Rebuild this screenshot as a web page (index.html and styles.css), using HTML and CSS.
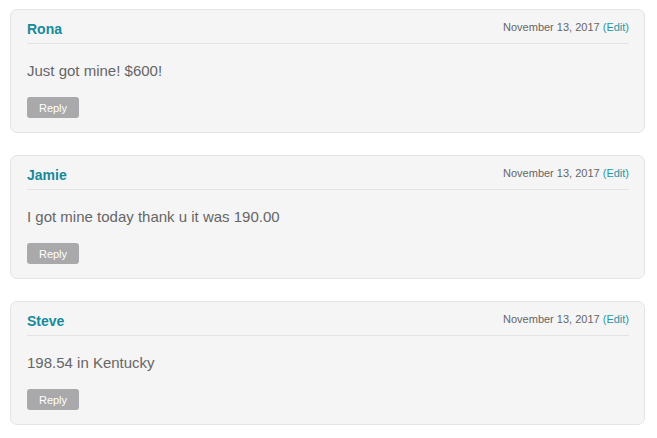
FILE: index.html
```html
<!DOCTYPE html>
<html lang="en">
<head>
    <meta charset="UTF-8">
    <meta name="viewport" content="width=device-width, initial-scale=1.0">
    <title>Comments</title>
    <link rel="stylesheet" href="styles.css">
</head>
<body>
    <div class="comment-list">
        <div class="comment">
            <div class="comment-header">
                <span class="comment-author">Rona</span>
                <span class="comment-date">November 13, 2017 <a href="#">(Edit)</a></span>
            </div>
            <p class="comment-text">Just got mine! $600!</p>
            <button class="reply-btn">Reply</button>
        </div>

        <div class="comment">
            <div class="comment-header">
                <span class="comment-author">Jamie</span>
                <span class="comment-date">November 13, 2017 <a href="#">(Edit)</a></span>
            </div>
            <p class="comment-text">I got mine today thank u it was 190.00</p>
            <button class="reply-btn">Reply</button>
        </div>

        <div class="comment">
            <div class="comment-header">
                <span class="comment-author">Steve</span>
                <span class="comment-date">November 13, 2017 <a href="#">(Edit)</a></span>
            </div>
            <p class="comment-text">198.54 in Kentucky</p>
            <button class="reply-btn">Reply</button>
        </div>
    </div>
</body>
</html>
```

FILE: styles.css
```css
body {
    font-family: "Liberation Sans", Arial, sans-serif;
    background: #fff;
    margin: 0;
    padding: 9px 12px 0 10px;
}

.comment-list {
    display: flex;
    flex-direction: column;
    gap: 22px;
}

.comment {
    background-color: #f5f5f5;
    border: 1px solid #e4e4e4;
    border-radius: 7px;
    padding: 0 15px 13px 16px;
    height: 124px;
    box-sizing: border-box;
}

.comment-header {
    display: flex;
    justify-content: space-between;
    align-items: flex-start;
    height: 34px;
    box-sizing: border-box;
    padding-top: 11px;
    border-bottom: 1px solid #e3e3e3;
}

.comment-author {
    color: #17899a;
    font-weight: bold;
    font-size: 14px;
    line-height: 16px;
}

.comment-date {
    color: #666;
    font-size: 11px;
    line-height: 16px;
    margin-top: -2px;
}

.comment-date a {
    color: #1f97a8;
    text-decoration: none;
}

.comment-text {
    margin: 16px 0;
    font-size: 15px;
    line-height: 21px;
    color: #666;
}

.reply-btn {
    display: block;
    background-color: #a9a9ab;
    color: #fff;
    border: none;
    border-radius: 3px;
    font-family: inherit;
    font-size: 11px;
    width: 52px;
    height: 21px;
    padding: 0;
    cursor: pointer;
}
```
